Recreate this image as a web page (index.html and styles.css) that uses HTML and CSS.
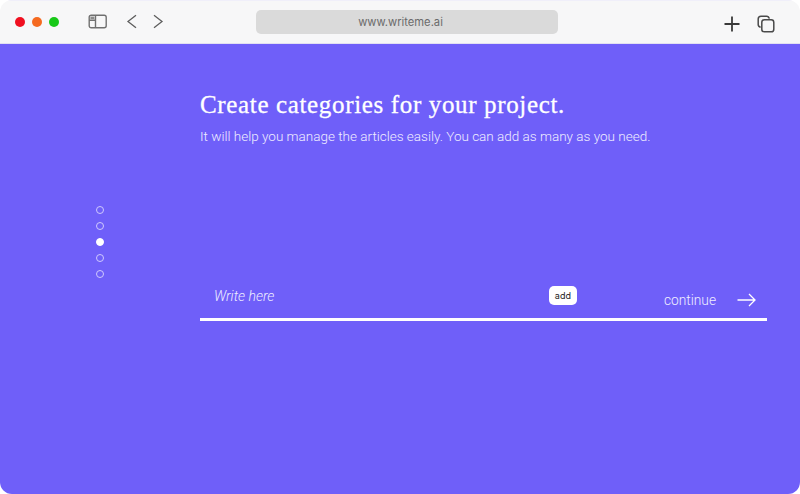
FILE: index.html
```html
<!DOCTYPE html>
<html lang="en">
<head>
<meta charset="utf-8">
<title>WriteMe</title>
<link rel="stylesheet" href="styles.css">
</head>
<body>
<div class="window">
  <header class="toolbar">
    <div class="lights">
      <span class="light red"></span>
      <span class="light orange"></span>
      <span class="light green"></span>
    </div>
    <svg class="icon sidebar" width="20" height="16" viewBox="0 0 20 16" fill="none" stroke="#707070" stroke-width="1.4">
      <rect x="1.2" y="1.2" width="17" height="12.6" rx="2"/>
      <path d="M7.5 1.2V13.8M1.2 6.2H7.5"/>
      <rect x="2.4" y="2.6" width="4" height="2.6" fill="#8a8a8a" stroke="none"/>
    </svg>
    <svg class="icon back" width="12" height="16" viewBox="0 0 12 16" fill="none" stroke="#5e5e5e" stroke-width="1.3">
      <path d="M10 1.2L2 7.5L10 13.8"/>
    </svg>
    <svg class="icon forward" width="12" height="16" viewBox="0 0 12 16" fill="none" stroke="#5e5e5e" stroke-width="1.3">
      <path d="M2 1.2L10 7.5L2 13.8"/>
    </svg>
    <div class="address">www.writeme.ai</div>
    <svg class="icon plus" width="18" height="18" viewBox="0 0 18 18" fill="none" stroke="#3a3a3a" stroke-width="1.8">
      <path d="M9 1.5V16.5M1.5 9H16.5"/>
    </svg>
    <svg class="icon copy" width="18" height="18" viewBox="0 0 18 18" fill="none" stroke="#4a4a4a" stroke-width="1.5">
      <path d="M3.6 12.3C2 11.9 1.2 11 1.2 9.6V4C1.2 2.2 2.2 1.2 4 1.2H9.6C11 1.2 11.9 2 12.3 3.6"/>
      <rect x="4.8" y="4.8" width="12" height="12" rx="2.6"/>
    </svg>
  </header>
  <main class="stage">
    <nav class="dots">
      <span class="dot"></span>
      <span class="dot"></span>
      <span class="dot active"></span>
      <span class="dot"></span>
      <span class="dot"></span>
    </nav>
    <section class="content">
      <h1 class="title">Create categories for your project.</h1>
      <p class="lead">It will help you manage the articles easily. You can add as many as you need.</p>
      <div class="entry">
        <span class="placeholder">Write here</span>
        <button class="add" type="button">add</button>
        <div class="continue">
          <span>continue</span>
          <svg width="19" height="14" viewBox="0 0 19 14" fill="none" stroke="#fff" stroke-width="1.3">
            <path d="M0.5 7H18M12 1L18 7L12 13"/>
          </svg>
        </div>
      </div>
    </section>
  </main>
</div>
</body>
</html>
```

FILE: styles.css
```css
* {
  box-sizing: border-box;
}

html,
body {
  margin: 0;
  height: 100%;
  background: #fff;
}

.window {
  height: 494px;
  width: 800px;
  display: flex;
  flex-direction: column;
  border-radius: 12px;
  overflow: hidden;
}

.toolbar {
  height: 44px;
  flex: none;
  display: flex;
  align-items: center;
  background: #f7f7f8;
  border-top: 1px solid #f0effa;
  border-bottom: 1px solid #e2e0f2;
  padding-left: 15px;
}

.lights {
  display: flex;
  gap: 7px;
}

.light {
  width: 10px;
  height: 10px;
  border-radius: 50%;
}

.red { background: #f01020; }
.orange { background: #f56a20; }
.green { background: #18c818; }

.icon {
  flex: none;
  display: block;
}

.sidebar { margin-left: 29px; }
.back { margin-left: 18px; }
.forward { margin-left: 14px; }

.address {
  width: 302px;
  height: 24px;
  margin-left: 92px;
  padding-right: 13px;
  border-radius: 5px;
  background: #dadada;
  color: #6b6b6b;
  font: 11.2px/24px "Inter", "Liberation Sans", sans-serif;
  text-align: center;
}

.plus { margin: 3px 0 0 165px; }
.copy { margin: 3px 0 0 16px; }

.stage {
  flex: 1;
  display: flex;
  background: #6f5ff9;
}

.dots {
  width: 200px;
  flex: none;
  padding: 162px 0 0 96px;
  display: flex;
  flex-direction: column;
  gap: 8px;
}

.dot {
  width: 8px;
  height: 8px;
  border-radius: 50%;
  border: 1px solid #cfc9fd;
}

.dot.active {
  background: #fff;
  border-color: #fff;
}

.content {
  width: 567px;
  flex: none;
  padding-top: 46px;
  color: #fff;
}

.title {
  margin: 0;
  font: 400 25px/30px "Liberation Serif", "DejaVu Serif", serif;
  letter-spacing: 0.65px;
  -webkit-text-stroke: 0.3px #fff;
  white-space: nowrap;
}

.lead {
  margin: 6px 0 0;
  font: 300 13.5px/20px "Roboto", sans-serif;
  color: #f0eeff;
  white-space: nowrap;
}

.entry {
  margin-top: 129px;
  height: 46px;
  display: flex;
  align-items: flex-start;
  border-bottom: 3px solid #fff;
}

.placeholder {
  margin: 11px 0 0 14px;
  font: italic 300 14px/20px "Roboto", sans-serif;
  color: #f0eeff;
}

.add {
  width: 28px;
  height: 19px;
  margin: 11px 0 0 auto;
  padding: 0;
  border: 0;
  border-radius: 5px;
  background: #fff;
  color: #222;
  font: 400 9px/19px "Inter", "Liberation Sans", sans-serif;
}

.continue {
  margin: 15px 11px 0 87px;
  display: flex;
  align-items: center;
  gap: 21px;
  font: 300 13.75px/20px "Roboto", sans-serif;
  color: #f0eeff;
}
```
